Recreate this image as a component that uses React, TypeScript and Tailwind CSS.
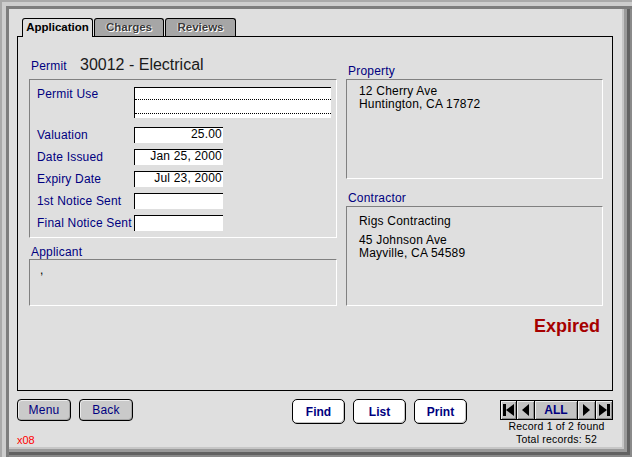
import type { ReactNode } from 'react';

const labelCls = 'text-[12px] text-[#000080] tracking-[0.2px]';
const insetBox = 'border border-t-[#808080] border-l-[#808080] border-b-white border-r-white';

const Field = ({ label, value }: { label: string; value?: string }) => (
  <div className="flex items-center h-[16px]">
    <span className={`w-[97px] leading-[16px] whitespace-nowrap ${labelCls}`}>{label}</span>
    <div className="w-[89px] h-[16px] bg-white border-t border-l border-black text-right pr-px text-[12px] leading-[13px] tracking-[0.2px] text-black">
      {value}
    </div>
  </div>
);

const NavBtn = ({ className, children }: { className: string; children: ReactNode }) => (
  <div
    className={`flex items-center justify-center h-full bg-[#c3c3c3] shadow-[inset_1px_1px_0_#efefef,inset_-1px_-1px_0_#8c8c8c] ${className}`}
  >
    {children}
  </div>
);

export default function App() {
  return (
    <div className="w-[632px] h-[457px] bg-[#dfdfdf] pt-[18px] pl-[17px] pr-[19px] font-['Liberation_Sans',Arial,sans-serif] text-black shadow-[inset_2px_2px_0_#a9a9a9,inset_6px_6px_0_#cdcdcd,inset_9px_9px_0_#7d7d7d,inset_-2px_-2px_0_#8a8a8a,inset_-5px_-5px_0_#626262,inset_-8px_-8px_0_#9a9a9a,inset_-10px_-10px_0_#c6c6c6]">
      {/* tabs */}
      <div className="flex items-start h-[18px] pl-[5px]">
        <div className="relative z-10 w-[71px] h-[19px] bg-[#dfdfdf] border border-b-0 border-black rounded-t-[3px] flex items-center justify-center text-[11.5px] font-bold">
          Application
        </div>
        <div className="ml-px w-[70px] h-[18px] bg-[#a6a6a6] border border-b-0 border-black rounded-t-[3px] flex items-center justify-center text-[11.5px] font-bold text-[#3a3a3a] [text-shadow:1px_1px_0_#ffffff,-1px_0_0_#d8d8d8]">
          Charges
        </div>
        <div className="ml-px w-[71px] h-[18px] bg-[#a6a6a6] border border-b-0 border-black rounded-t-[3px] flex items-center justify-center text-[11.5px] font-bold text-[#3a3a3a] [text-shadow:1px_1px_0_#ffffff,-1px_0_0_#d8d8d8]">
          Reviews
        </div>
      </div>

      {/* panel */}
      <div className="w-[596px] h-[355px] border border-black bg-[#dfdfdf] pt-[19px] pl-[11px] pr-[9px] flex gap-[9px]">
        <div className="w-[308px] flex flex-col">
          <div className="flex items-baseline h-[18px] leading-[18px] mb-[5px] pl-[2px]">
            <span className={`w-[49px] ${labelCls}`}>Permit</span>
            <span className="text-[16px] text-[#1a1a1a]">30012 - Electrical</span>
          </div>

          <div className={`h-[159px] pt-[7px] pl-[7px] ${insetBox}`}>
            <div className="flex items-start">
              <span className={`w-[97px] leading-[14px] ${labelCls}`}>Permit Use</span>
              <div className="w-[197px] h-[31px] bg-white border-t border-l border-black">
                <div className="h-[12px] border-b border-dotted border-black" />
                <div className="h-[14px] border-b border-dotted border-black" />
              </div>
            </div>
            <div className="mt-[9px] flex flex-col gap-[6px]">
              <Field label="Valuation" value="25.00" />
              <Field label="Date Issued" value="Jan 25, 2000" />
              <Field label="Expiry Date" value="Jul 23, 2000" />
              <Field label="1st Notice Sent" />
              <Field label="Final Notice Sent" />
            </div>
          </div>

          <div className={`mt-[7px] pl-[2px] h-[14px] leading-[14px] ${labelCls}`}>Applicant</div>
          <div className={`h-[47px] pt-[4px] pl-[10px] text-[12px] leading-[13px] ${insetBox}`}>,</div>
        </div>

        <div className="w-[257px] flex flex-col">
          <div className={`mt-[8px] pl-[2px] h-[15px] leading-[14px] ${labelCls}`}>Property</div>
          <div className={`h-[100px] pt-[5px] pl-[12px] text-[12px] leading-[13px] tracking-[0.2px] ${insetBox}`}>
            <div>12 Cherry Ave</div>
            <div>Huntington, CA 17872</div>
          </div>

          <div className={`mt-[12px] pl-[2px] h-[15px] leading-[14px] ${labelCls}`}>Contractor</div>
          <div className={`h-[100px] pt-[8px] pl-[12px] text-[12px] leading-[13px] tracking-[0.2px] ${insetBox}`}>
            <div>Rigs Contracting</div>
            <div className="mt-[6px]">45 Johnson Ave</div>
            <div>Mayville, CA 54589</div>
          </div>

          <div className="mt-[9px] pr-[3px] text-right text-[18px] leading-[22px] font-bold text-[#a60000]">Expired</div>
        </div>
      </div>

      {/* bottom bar */}
      <div className="flex items-start mt-[8px]">
        <div className="flex flex-col">
          <div className="flex gap-[8px]">
            {['Menu', 'Back'].map((b) => (
              <button
                key={b}
                className="w-[54px] h-[22px] rounded-[4px] border border-black bg-[#cacaca] text-[12px] tracking-[0.2px] text-[#000080] shadow-[inset_1px_1px_0_#ececec,inset_-1px_-1px_0_#a8a8a8]"
              >
                {b}
              </button>
            ))}
          </div>
          <div className="mt-[13px] text-[11px] leading-[12px] text-[#ff0000]">x08</div>
        </div>

        <div className="ml-[159px] flex gap-[8px]">
          {['Find', 'List', 'Print'].map((b) => (
            <button
              key={b}
              className="w-[53px] h-[25px] rounded-[5px] border border-black bg-white text-[12px] font-bold text-[#000080] shadow-[inset_-1px_-1px_0_#c4c4c4]"
            >
              {b}
            </button>
          ))}
        </div>

        <div className="ml-auto mt-px flex flex-col items-center">
          <div className="flex h-[20px] w-[113px] border border-black">
            <NavBtn className="w-[15px]">
              <svg width="11" height="12" viewBox="0 0 11 12">
                <rect x="0" y="0" width="3" height="12" fill="#000" />
                <polygon points="11,0 3,6 11,12" fill="#000" />
              </svg>
            </NavBtn>
            <NavBtn className="w-[18px] border-l border-black">
              <svg width="7" height="12" viewBox="0 0 7 12">
                <polygon points="7,0 0,6 7,12" fill="#000" />
              </svg>
            </NavBtn>
            <NavBtn className="w-[43px] border-l border-black">
              <span className="text-[12px] font-bold text-[#000080]">ALL</span>
            </NavBtn>
            <NavBtn className="w-[18px] border-l border-black">
              <svg width="7" height="12" viewBox="0 0 7 12">
                <polygon points="0,0 7,6 0,12" fill="#000" />
              </svg>
            </NavBtn>
            <NavBtn className="w-[17px] border-l border-black">
              <svg width="11" height="12" viewBox="0 0 11 12">
                <polygon points="0,0 8,6 0,12" fill="#000" />
                <rect x="8" y="0" width="3" height="12" fill="#000" />
              </svg>
            </NavBtn>
          </div>
          <div className="text-[10.5px] leading-[12.5px] tracking-[0.2px] text-center text-black">
            <div>Record 1 of 2 found</div>
            <div>Total records: 52</div>
          </div>
        </div>
      </div>
    </div>
  );
}
